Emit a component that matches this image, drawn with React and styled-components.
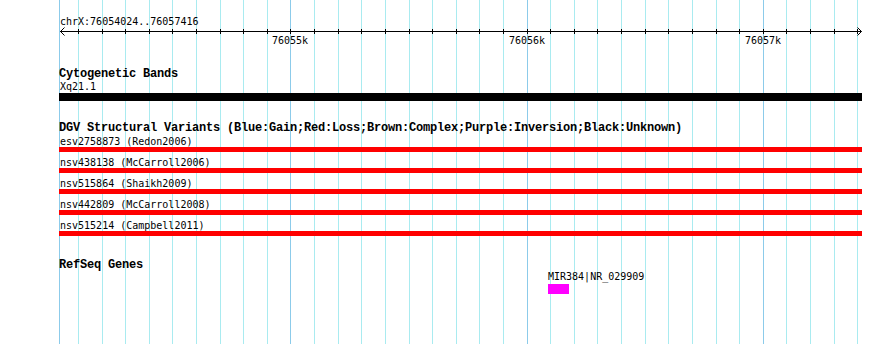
import React from "react";
import styled, { createGlobalStyle } from "styled-components";

const START = 76054024;
const END = 76057416;
const TRACK_X0 = 60;
const TRACK_X1 = 861;
const LEFT = 59;
const bpToX = (bp) => TRACK_X0 + ((bp - START) * (TRACK_X1 - TRACK_X0)) / (END - START);

const ticks = [];
for (let bp = 76054100; bp <= 76057400; bp += 100) {
  ticks.push({ bp, x: Math.round(bpToX(bp)), major: bp % 1000 === 0 });
}

const variants = [
  "esv2758873 (Redon2006)",
  "nsv438138 (McCarroll2006)",
  "nsv515864 (Shaikh2009)",
  "nsv442809 (McCarroll2008)",
  "nsv515214 (Campbell2011)",
];

const gene = { name: "MIR384|NR_029909", x: 548, width: 21 };

const MONO = '"DejaVu Sans Mono", "Liberation Mono", monospace';

const Global = createGlobalStyle`
  html, body { margin: 0; padding: 0; background: #ffffff; }
  body { font-family: ${MONO}; }
`;

const Canvas = styled.div`
  position: relative;
  width: 890px;
  height: 344px;
  overflow: hidden;
  background: #ffffff;
`;

const GridLayer = styled.svg`
  position: absolute;
  left: 0;
  top: 0;
  width: 890px;
  height: 344px;
`;

const Content = styled.div`
  position: relative;
  display: flex;
  flex-direction: column;
  padding-left: ${LEFT}px;
`;

const Label = styled.div`
  font-family: ${MONO};
  font-size: 10px;
  line-height: ${(p) => p.$lh || 11}px;
  height: ${(p) => p.$lh || 11}px;
  color: #000;
  white-space: nowrap;
  margin-top: ${(p) => p.$mt || 0}px;
  padding-left: 1px;
`;

const Title = styled.div`
  font-family: "Liberation Mono", "DejaVu Sans Mono", monospace;
  font-weight: bold;
  font-size: 12px;
  letter-spacing: -0.2px;
  line-height: 13px;
  height: 13px;
  color: #000;
  white-space: nowrap;
  margin-top: ${(p) => p.$mt}px;
`;

const RulerSvg = styled.svg`
  display: block;
  width: 803px;
  height: 18px;
  overflow: visible;
`;

const Bar = styled.div`
  width: 803px;
  height: ${(p) => p.$h}px;
  background: ${(p) => p.$color};
`;

const VariantList = styled.div`
  display: flex;
  flex-direction: column;
  gap: 5px;
  margin-top: 1px;
`;

const VariantRow = styled.div`
  display: flex;
  flex-direction: column;
`;

const GeneTrack = styled.div`
  display: flex;
  flex-direction: column;
  align-items: flex-start;
  margin-top: -1px;
`;

const GeneBox = styled.div`
  height: 10px;
  background: #ff00ff;
  margin-top: 2px;
`;

function Grid() {
  return (
    <GridLayer viewBox="0 0 890 344">
      <line x1={LEFT + 0.5} y1={0} x2={LEFT + 0.5} y2={344} stroke="#8ccbea" strokeWidth="1" />
      {ticks.map((t) => (
        <line
          key={t.bp}
          x1={t.x + 0.5}
          y1={0}
          x2={t.x + 0.5}
          y2={344}
          stroke={t.major ? "#8ccbea" : "#a9ebf0"}
          strokeWidth="1"
        />
      ))}
    </GridLayer>
  );
}

function Ruler() {
  const y = 3.5;
  const x0 = TRACK_X0 - LEFT;
  const x1 = TRACK_X1 - LEFT;
  return (
    <RulerSvg viewBox="0 0 803 18">
      <line x1={x0} y1={y} x2={x1 + 0.5} y2={y} stroke="#000" strokeWidth="1" />
      <polyline points={`${x0 + 4.5},${y - 4} ${x0 + 0.5},${y} ${x0 + 4.5},${y + 4}`} fill="none" stroke="#000" strokeWidth="1" />
      <polyline points={`${x1 - 3.5},${y - 4} ${x1 + 0.5},${y} ${x1 - 3.5},${y + 4}`} fill="none" stroke="#000" strokeWidth="1" />
      {ticks.map((t) => (
        <line key={t.bp} x1={t.x - LEFT + 0.5} y1={1} x2={t.x - LEFT + 0.5} y2={6} stroke="#000" strokeWidth="1" />
      ))}
      {ticks
        .filter((t) => t.major)
        .map((t) => (
          <text
            key={t.bp}
            x={t.x - LEFT}
            y={15.5}
            textAnchor="middle"
            fontFamily={MONO}
            fontSize="10"
            fill="#000"
          >
            {`${t.bp / 1000}k`}
          </text>
        ))}
    </RulerSvg>
  );
}

export default function App() {
  return (
    <>
      <Global />
      <Canvas>
        <Grid />
        <Content>
          <Label $lh={12} $mt={16}>chrX:76054024..76057416</Label>
          <Ruler />
          <Title $mt={22}>Cytogenetic Bands</Title>
          <Label $lh={12}>Xq21.1</Label>
          <Bar $h={8} $color="#000000" />
          <Title $mt={21}>DGV Structural Variants (Blue:Gain;Red:Loss;Brown:Complex;Purple:Inversion;Black:Unknown)</Title>
          <VariantList>
            {variants.map((v) => (
              <VariantRow key={v}>
                <Label>{v}</Label>
                <Bar $h={5} $color="#ff0000" />
              </VariantRow>
            ))}
          </VariantList>
          <Title $mt={23}>RefSeq Genes</Title>
          <GeneTrack style={{ marginLeft: gene.x - LEFT - 1 }}>
            <Label>{gene.name}</Label>
            <GeneBox style={{ width: gene.width, marginLeft: 1 }} />
          </GeneTrack>
        </Content>
      </Canvas>
    </>
  );
}
